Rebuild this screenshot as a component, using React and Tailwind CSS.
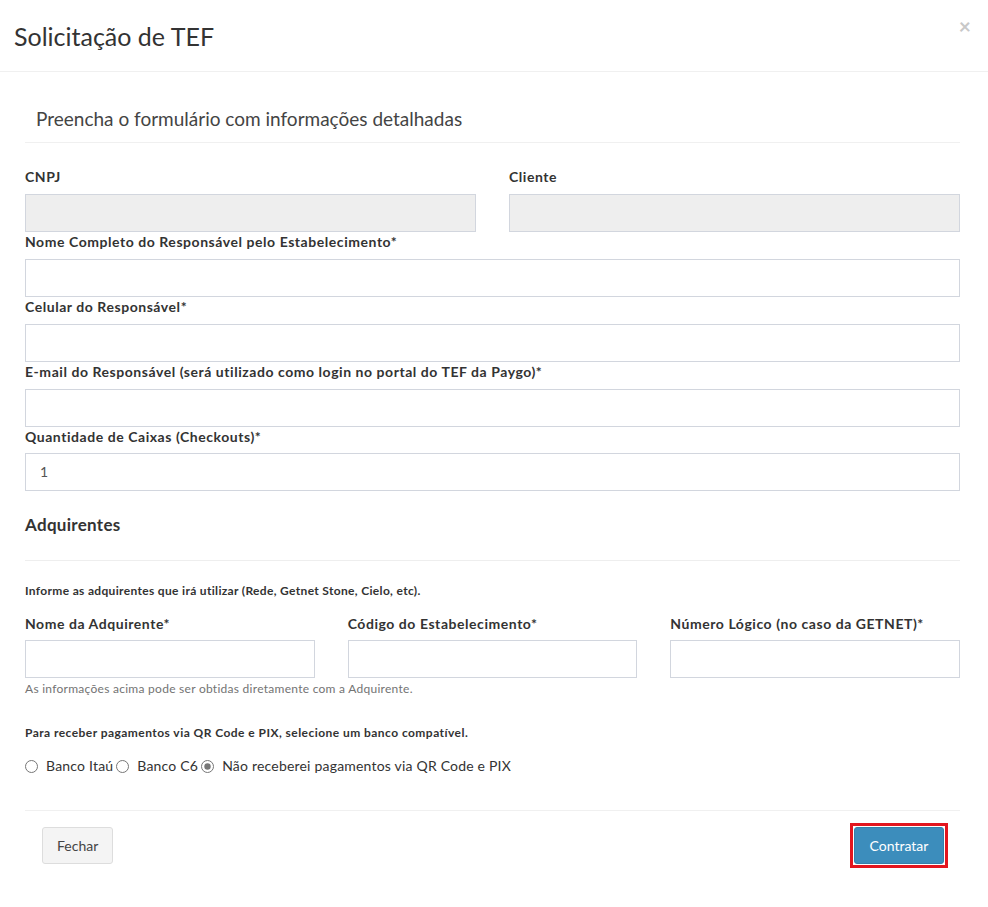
import React from "react";

const font = { fontFamily: "Lato, 'Noto Sans', sans-serif" };

function Field({ label, value, readOnly, labelGap = "mb-[7px]" }) {
  return (
    <div>
      <label className={`block h-[20px] text-[14px] leading-[20px] font-bold tracking-[0.55px] whitespace-nowrap text-[#333] ${labelGap}`}>
        {label}
      </label>
      <div
        className={`h-[38px] border border-[#d2d6de] px-[14px] text-[14px] leading-[36px] text-[#555] ${
          readOnly ? "bg-[#eeeeee]" : "bg-white"
        }`}
      >
        {value}
      </div>
    </div>
  );
}

function Radio({ checked, label }) {
  return (
    <span className="inline-flex items-center">
      <svg width="13" height="13" viewBox="0 0 13 13" className="mr-[8px]">
        <circle cx="6.5" cy="6.5" r="6" fill="white" stroke="#767676" strokeWidth="1" />
        {checked && <circle cx="6.5" cy="6.5" r="3.2" fill="#767676" />}
      </svg>
      <span className="mr-[3px]">{label}</span>
    </span>
  );
}

export default function App() {
  return (
    <div className="min-h-screen bg-white text-[#333]" style={font}>
      <div className="relative h-[72px] border-b border-[#f0f0f0] px-[14px] pt-[19px]">
        <h1 className="text-[25px] leading-[34px] font-normal text-[#333]">Solicitação de TEF</h1>
        <span className="absolute right-[17px] top-[13px] text-[21px] font-bold leading-[26px] text-[#c8c8c8]">
          ×
        </span>
      </div>

      <div className="pl-[25px] pr-[28px] pt-[23px]">
        <div className="h-[48px] border-b border-[#f0f0f0] px-[11px] pt-[11px]">
          <h3 className="text-[19px] leading-[26px] font-normal text-[#444]">
            Preencha o formulário com informações detalhadas
          </h3>
        </div>

        <div className="pt-[24px]">
          <div className="grid grid-cols-2 gap-[33px]">
            <Field label="CNPJ" readOnly />
            <Field label="Cliente" readOnly />
          </div>
          <Field label="Nome Completo do Responsável pelo Estabelecimento*" />
          <Field label="Celular do Responsável*" />
          <Field label="E-mail do Responsável (será utilizado como login no portal do TEF da Paygo)*" />
          <Field label="Quantidade de Caixas (Checkouts)*" value="1" labelGap="mb-[6px]" />

          <h4 className="mt-[22px] text-[17px] leading-[24px] font-bold tracking-[0.3px] text-[#333]">Adquirentes</h4>
          <div className="mt-[23px] border-t border-[#eeeeee]" />

          <p className="mt-[21px] text-[12px] leading-[18px] font-bold tracking-[0.33px] text-[#333]">
            Informe as adquirentes que irá utilizar (Rede, Getnet Stone, Cielo, etc).
          </p>

          <div className="mt-[14px] grid grid-cols-3 gap-[33px]">
            <Field label="Nome da Adquirente*" labelGap="mb-[6px]" />
            <Field label="Código do Estabelecimento*" labelGap="mb-[6px]" />
            <Field label="Número Lógico (no caso da GETNET)*" labelGap="mb-[6px]" />
          </div>
          <p className="mt-[2px] text-[12px] leading-[18px] tracking-[0.27px] text-[#737373]">
            As informações acima pode ser obtidas diretamente com a Adquirente.
          </p>

          <p className="mt-[26px] text-[12px] leading-[18px] font-bold tracking-[0.45px] text-[#333]">
            Para receber pagamentos via QR Code e PIX, selecione um banco compatível.
          </p>
          <div className="mt-[14px] flex items-center text-[14px] leading-[20px] tracking-[0.2px] text-[#333]">
            <Radio label="Banco Itaú" />
            <Radio label="Banco C6" />
            <Radio checked label="Não receberei pagamentos via QR Code e PIX" />
          </div>
        </div>

        <div className="mt-[34px] flex items-start justify-between border-t border-[#f0f0f0] pl-[17px] pr-[12px] pt-[16px]">
          <button className="h-[37px] rounded-[3px] border border-[#dddddd] bg-[#f4f4f4] px-[14px] text-[14px] text-[#444]">
            Fechar
          </button>
          <span className="-mt-[4px] border-[3px] border-[#e3161f] p-[1px]">
            <button className="block h-[37px] w-[90px] rounded-[3px] border border-[#367fa9] bg-[#3c8dbc] text-[14px] text-white">
              Contratar
            </button>
          </span>
        </div>
      </div>
    </div>
  );
}
